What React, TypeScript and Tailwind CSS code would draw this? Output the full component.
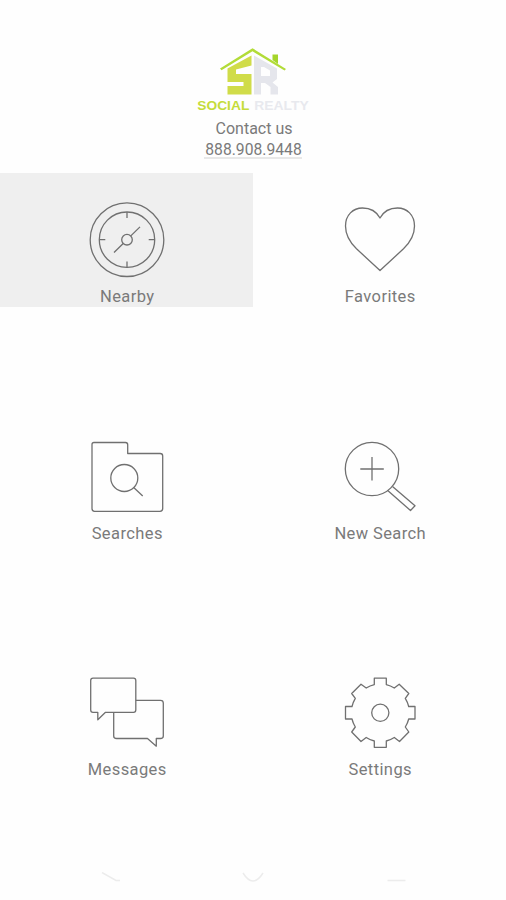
import type { ReactNode } from "react";

function Icon({ viewBox, children }: { viewBox: string; children: ReactNode }) {
  return (
    <svg
      className="h-20 w-20 shrink-0 text-[#707070]"
      viewBox={viewBox}
      fill="none"
      stroke="currentColor"
      strokeWidth="1.3"
      strokeLinejoin="round"
    >
      {children}
    </svg>
  );
}

const compass = (
  <Icon viewBox="87 200 80 80">
    <circle cx="127" cy="239.7" r="36.8" />
    <circle cx="127" cy="239.7" r="27.7" />
    <circle cx="127" cy="239.7" r="5.3" />
    <path d="M127 212v6M127 261.4v6M99.3 239.7h6M148.7 239.7h6M130.8 235.9l9.2-9M123.2 243.5l-9.2 9" />
  </Icon>
);

const heart = (
  <Icon viewBox="340 200 80 80">
    <path d="M380 270.5L356.500 248.800C349 241.500 345.500 235 345.500 226C345.500 215 353 208 362.500 208C370 208 376.500 211.500 380 218C383.500 211.500 390 208 397.500 208C407 208 414.500 215 414.500 226C414.500 235 411 241.500 403.500 248.800Z" />
  </Icon>
);

const folder = (
  <Icon viewBox="87 437 80 80">
    <path d="M94 442.500H125.500Q127.700 442.500 127.700 444.700V453.500H160.200Q162.700 453.500 162.700 456V508.500Q162.700 511.300 160 511.300H94.500Q92 511.300 92 508.500V444.500Q92 442.500 94 442.500Z" />
    <circle cx="124.300" cy="478" r="13.500" />
    <path d="M133.700 487.500L142.700 496" />
  </Icon>
);

const zoomIn = (
  <Icon viewBox="340 437 80 80">
    <circle cx="372" cy="469" r="26.700" />
    <path d="M372 457v23.500M360.300 469h23.500M392.500 486.400L415 505.800L410.500 510.500L387.700 490.500" />
  </Icon>
);

const bubbles = (
  <Icon viewBox="87 673 80 80">
    <path d="M93 678.200H133.500Q135.800 678.200 135.800 680.500V710Q135.800 712.300 133.500 712.300H105.500L97.800 719.700V712.300H93Q90.700 712.300 90.700 710V680.500Q90.700 678.200 93 678.200Z" />
    <path d="M135.800 700.300H160.500Q163.300 700.300 163.300 703V736Q163.300 738.500 160.500 738.500H156.300V746.200L147.500 738.500H116.500Q113.700 738.500 113.700 736V712.500" />
  </Icon>
);

const gear = (
  <Icon viewBox="340 673 80 80">
    <circle cx="380.300" cy="712.800" r="8.600" />
    <path d="M374.300 678.200H386.300V684.600Q390.500 685.600 394.300 688L399.200 684.200L408.800 693.500L405.300 698.300Q407.700 702.200 408.700 706.500H415V719H408.700Q407.700 723.200 405.300 727L408.800 732L399.500 741.500L394.300 737.500Q390.500 740 386.300 741V747.300H374.300V741Q370 740 366.200 737.500L361 741.500L351.700 732L355.300 727Q353 723.200 352 719H345.500V706.500H352Q353 702.200 355.300 698.300L351.700 693.500L361 684.200L366.200 688Q370 685.600 374.300 684.600Z" />
  </Icon>
);

const items = [
  { label: "Nearby", icon: compass, active: true },
  { label: "Favorites", icon: heart },
  { label: "Searches", icon: folder },
  { label: "New Search", icon: zoomIn },
  { label: "Messages", icon: bubbles },
  { label: "Settings", icon: gear },
];

function Logo() {
  return (
    <svg className="h-[68px] w-[120px]" viewBox="193 47 120 68" fill="none">
      <path d="M220 68.500L252.500 48.200L286 69L284.500 70.500L252.500 51.300L221.500 70.200Z" fill="#b2dc38" />
      <path d="M272.500 60V54.500H278V64Z" fill="#a5d52b" />
      <path d="M251.500 55.500V65.500L236 69.500V74H251.500V94.500H227.500V86H243.500V82H227.500V68.500Z" fill="#d0dc49" />
      <path d="M254 55.500L277 68.500V79L272.500 82.500L278 87V94.500H270.500V87L265 83H261V94.500H254ZM261 67V76H270V70.500L264 67Z" fill="#e5e6ec" fillRule="evenodd" />
      <g className="font-['Liberation_Sans',sans-serif] text-[13px] font-bold">
        <text x="197.300" y="109.500" textLength="52" lengthAdjust="spacingAndGlyphs" fill="#c5dc3b">SOCIAL</text>
        <text x="254.300" y="109.500" textLength="54.500" lengthAdjust="spacingAndGlyphs" fill="#e8e9ee">REALTY</text>
      </g>
    </svg>
  );
}

export default function App() {
  return (
    <main className="flex h-[900px] w-[506px] flex-col overflow-hidden bg-[#fefefe] font-[Roboto,sans-serif] text-base text-[#7a7a7a]">
      <header className="flex h-[172.5px] shrink-0 flex-col items-center pt-[47px]">
        <Logo />
        <p className="h-[21px] pl-0.5 leading-[27px]">Contact us</p>
        <p className="mt-px h-[22px] border-b-2 border-[#e8e8e8] pl-px text-[15.700px] leading-[26px]">888.908.9448</p>
      </header>
      <nav className="grid h-[699.5px] shrink-0 grid-cols-2 grid-rows-[236.5px_236.5px_226.5px]">
        {items.map(({ label, icon, active }) => (
          <button
            key={label}
            className={`flex h-[134.5px] flex-col items-center pt-[27.5px] ${active ? "bg-[#efefef]" : ""}`}
          >
            {icon}
            <span className="mt-[5px] pl-[1.5px] text-[16.5px] leading-6 tracking-[0.4px]">{label}</span>
          </button>
        ))}
      </nav>
      <footer>
        <svg className="h-7 w-full text-[#ececec]" viewBox="0 872 506 28" fill="none" stroke="currentColor" strokeWidth="1.500">
          <path d="M102 872.500L116 880.500H120M243 873Q253 889 263 873M387.500 880.500H405.500" />
        </svg>
      </footer>
    </main>
  );
}
